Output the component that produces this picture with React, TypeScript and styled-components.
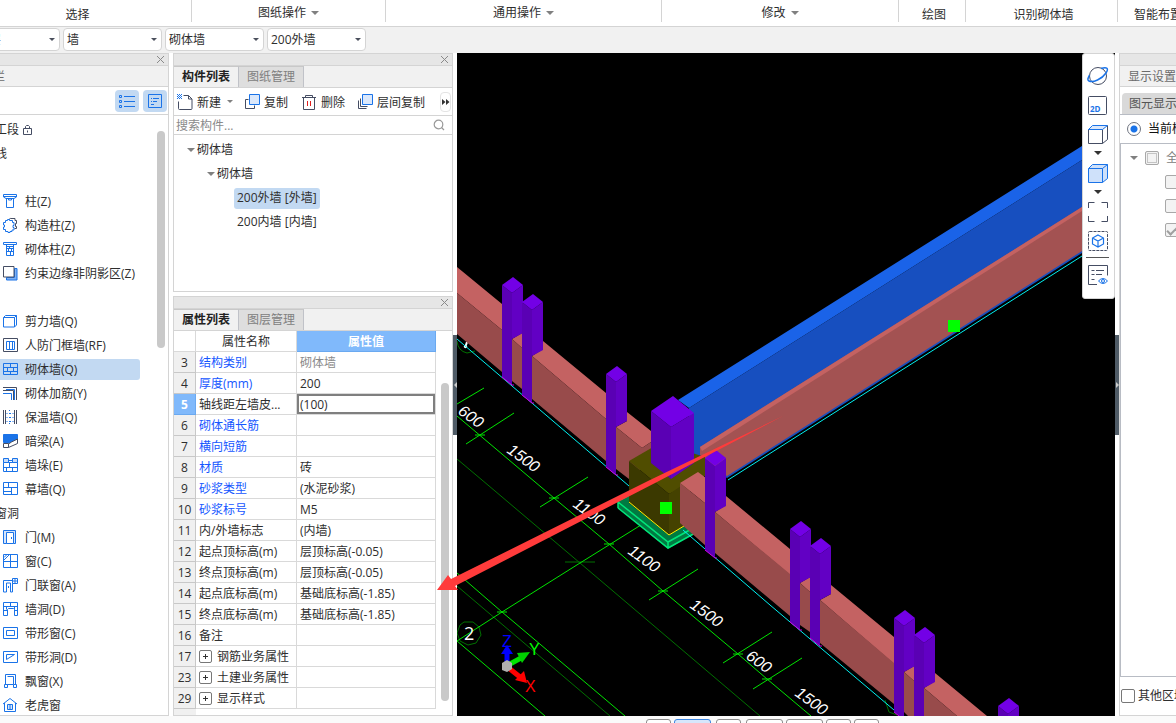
import React from 'react';
import styled, { createGlobalStyle, css } from 'styled-components';

const ink = '#2e2e2e';
const blue = '#1a73e8';
const dark = '#454d63';
const line = '#d4d4d4';
const pick = '#c2d9f2';

const GlobalStyle = createGlobalStyle`
  * { box-sizing: border-box; }
  body { margin: 0; overflow: hidden; background: #fff; }
  body, button, input, select, table {
    font-family: "Open Sans", "Noto Sans CJK SC", sans-serif;
    font-size: 12px;
    line-height: 16px;
    color: ${ink};
  }
  button { padding: 0; border: 0; background: none; white-space: nowrap; }
  svg { display: block; flex: none; }
`;

/* The window is wider than the visible part: its left 40px lie off screen. */
const Shell = styled.div`
  display: flex;
  flex-direction: column;
  height: 100vh;
  margin-left: -40px;
  overflow: hidden;
  background: #fff;
`;

/* ---------- ribbon ---------- */
const Ribbon = styled.header`
  display: flex;
  flex: none;
  height: 27px;
  padding-bottom: 4px;
  border-bottom: 1px solid ${line};
  overflow: hidden;
`;
const RibbonGroup = styled.div<{ $w?: number; $low?: boolean; $start?: boolean }>`
  display: flex;
  flex: ${(p) => (p.$w ? `0 0 ${p.$w}px` : '1 0 0')};
  align-items: flex-start;
  justify-content: ${(p) => (p.$start ? 'flex-start' : 'center')};
  padding: ${(p) => (p.$low ? '7px' : '5px')} 0 0 ${(p) => (p.$start ? '16px' : p.$low ? '4px' : '0')};
  border-right: 1px solid ${line};
  white-space: nowrap;
`;
const RibbonButton = styled.button`
  display: flex;
  align-items: center;
  gap: 5px;
`;
const Caret = styled.span<{ $size?: number; $color?: string }>`
  flex: none;
  border: ${(p) => p.$size ?? 4}px solid transparent;
  border-top-color: ${(p) => p.$color ?? '#808080'};
  border-bottom: 0;
`;

/* ---------- filter bar ---------- */
const FilterBar = styled.div`
  display: flex;
  flex: none;
  gap: 3px;
  height: 26px;
  padding: 1px 1px;
  background: #f1f1f1;
`;
const Combo = styled.label`
  position: relative;
  width: 99px;
  height: 23px;
  &::after {
    content: '';
    position: absolute;
    right: 5px;
    top: 10px;
    border: 3px solid transparent;
    border-top-color: #4a4f5c;
    border-bottom: 0;
  }
`;
const ComboSelect = styled.select`
  appearance: none;
  width: 100%;
  height: 100%;
  padding: 0 3px;
  border: 1px solid ${line};
  border-radius: 4px;
  background: #fff;
`;

/* ---------- panels ---------- */
const Workspace = styled.main`
  display: flex;
  flex: 1 1 0;
  min-height: 0;
`;
const Panel = styled.section<{ $grow?: boolean; $h?: number }>`
  display: flex;
  flex-direction: column;
  flex: ${(p) => (p.$grow ? '1 1 0' : '0 0 auto')};
  ${(p) => p.$h && css`height: ${p.$h}px;`}
  min-height: 0;
  border: 1px solid ${line};
  background: #fff;
  overflow: hidden;
`;
const NavPanel = styled(Panel)`
  flex: 0 0 209px;
`;
const Column = styled.div`
  display: flex;
  flex-direction: column;
  flex: 0 0 280px;
  gap: 4px;
  margin-left: 4px;
`;
const TitleStrip = styled.div`
  display: flex;
  flex: none;
  align-items: center;
  justify-content: flex-end;
  height: 12px;
  padding-right: 3px;
  border-bottom: 1px solid ${line};
  background: #e6e6e6;
`;
const PanelHeading = styled.h2`
  flex: none;
  height: 21px;
  margin: 0;
  padding: 2px 8px;
  border-bottom: 1px solid ${line};
  background: #f1f1f1;
  color: #6b6b6b;
  font-size: 12px;
  font-weight: 400;
  line-height: 18px;
  white-space: nowrap;
`;
const Tabs = styled.div`
  display: flex;
  flex: none;
  height: 22px;
  border-bottom: 1px solid ${line};
  background: #f1f1f1;
`;
const Tab = styled.button<{ $on?: boolean }>`
  width: 65px;
  border-right: 1px solid #c0c2c8;
  border-top: 1px solid #c8c8c8;
  background: ${(p) => (p.$on ? '#f1f1f1' : '#dedede')};
  color: ${(p) => (p.$on ? '#222' : '#808080')};
  font-weight: ${(p) => (p.$on ? 700 : 400)};
`;

/* ---------- navigation ---------- */
const NavTools = styled.div`
  display: flex;
  flex: none;
  justify-content: flex-end;
  gap: 4px;
  height: 28px;
  padding: 3px 1px;
  border-bottom: 1px solid ${line};
`;
const NavTool = styled.button`
  display: grid;
  place-items: center;
  width: 24px;
  height: 22px;
  border-radius: 4px;
  background: ${pick};
`;
const Scroller = styled.div`
  display: flex;
  flex: 1 1 0;
  min-height: 0;
  overflow: hidden;
`;
const NavList = styled.ul`
  flex: 1;
  margin: 0;
  padding: 2px 0 0;
  list-style: none;
`;
const NavEntry = styled.li`
  display: flex;
  align-items: center;
  height: 24px;
`;
const NavGroup = styled.button`
  display: flex;
  align-items: center;
  gap: 3px;
  padding: 2px 0 0 22px;
`;
const NavItem = styled.button<{ $on?: boolean }>`
  display: flex;
  align-items: center;
  width: 179px;
  height: 21px;
  padding-left: 41px;
  border-radius: 3px;
  background: ${(p) => (p.$on ? pick : 'none')};
`;
const NavText = styled.span`
  padding: 2px 0 0 7px;
`;
const ScrollTrack = styled.div<{ $top: number; $side: number }>`
  flex: none;
  width: 8px;
  margin: ${(p) => p.$top}px ${(p) => p.$side}px 0 5px;
`;
const ScrollThumb = styled.div<{ $h: number }>`
  height: ${(p) => p.$h}px;
  border-radius: 4px;
  background: #c9c9c9;
`;

/* ---------- component list ---------- */
const ToolRow = styled.div`
  display: flex;
  flex: none;
  align-items: center;
  height: 28px;
  padding-left: 3px;
  border-bottom: 1px solid ${line};
`;
const Tool = styled.button<{ $w: number }>`
  display: flex;
  align-items: center;
  flex: 0 0 ${(p) => p.$w}px;
  gap: 4px;
`;
const ToolText = styled.span`
  padding: 2px 2px 0 0;
`;
const More = styled.button`
  display: grid;
  place-items: center;
  width: 11px;
  height: 20px;
  margin-left: auto;
  margin-right: 1px;
  border: 1px solid #e4e4e4;
  border-radius: 4px;
`;
const SearchRow = styled.label`
  display: flex;
  flex: none;
  align-items: center;
  height: 19px;
  padding-right: 7px;
  border-bottom: 1px solid ${line};
`;
const SearchInput = styled.input`
  flex: 1;
  min-width: 0;
  padding: 2px 2px 0;
  border: 0;
  outline: 0;
  background: none;
  &::placeholder { color: #8a8a8a; opacity: 1; }
`;
const TreeList = styled.ul`
  margin: 0;
  padding: 3px 0 0;
  list-style: none;
`;
const TreeRow = styled.li<{ $depth: number }>`
  display: flex;
  align-items: center;
  height: 24px;
  padding-left: ${(p) => p.$depth * 20 - 7}px;
`;
const TreeButton = styled.button<{ $on?: boolean }>`
  display: flex;
  align-items: center;
  gap: 2px;
  height: 21px;
  padding: 0 3px 0 0;
  border-radius: 3px;
`;
const TreeLeaf = styled(TreeButton)`
  padding: 0 3px;
  background: ${(p) => (p.$on ? pick : 'none')};
`;
const Indent = styled.span`
  flex: 0 0 7px;
`;

/* ---------- property grid ---------- */
const GridWrap = styled.div`
  display: flex;
  flex: 1;
  flex-direction: column;
`;
const Grid = styled.table`
  width: 262px;
  table-layout: fixed;
  border-collapse: separate;
  border-spacing: 0;
`;
const GridRow = styled.tr`
  height: 21px;
`;
const cell = css`
  height: 21px;
  padding: 2px 3px 0;
  border-right: 1px solid #d9d9d9;
  border-bottom: 1px solid #d9d9d9;
  font-weight: 400;
  text-align: left;
  white-space: nowrap;
  overflow: hidden;
`;
const HeadCell = styled.th<{ $on?: boolean }>`
  ${cell}
  text-align: center;
  ${(p) => p.$on && css`
    background: #80b9fb;
    border-color: #6aa9f0;
    color: #fff;
    font-weight: 700;
  `}
`;
const NumCell = styled.th<{ $on?: boolean }>`
  ${cell}
  padding: 2px 0 0;
  text-align: center;
  background: ${(p) => (p.$on ? '#80b9fb' : '#f0f0f0')};
  border-color: ${(p) => (p.$on ? '#6aa9f0' : '#c8c8c8')};
  color: ${(p) => (p.$on ? '#fff' : ink)};
  font-weight: ${(p) => (p.$on ? 700 : 400)};
`;
const NameCell = styled.td<{ $link?: boolean }>`
  ${cell}
  color: ${(p) => (p.$link ? '#1456ff' : ink)};
`;
const ValueCell = styled.td<{ $on?: boolean; $dim?: boolean }>`
  ${cell}
  color: ${(p) => (p.$dim ? '#8a8a8a' : ink)};
  ${(p) => p.$on && css`box-shadow: inset 0 0 0 2px #7f7f7f;`}
`;
const Expander = styled.button`
  display: inline-grid;
  place-items: center;
  width: 13px;
  height: 13px;
  margin: 0 5px 2px 0;
  border: 1px solid #777;
  border-radius: 2px;
  vertical-align: middle;
`;
const Gutter = styled.div`
  flex: 1;
  width: 22px;
  background: #f0f0f0;
`;

/* ---------- viewport ---------- */
const Splitter = styled.div`
  display: flex;
  flex: 0 0 4px;
  align-items: center;
`;
const Handle = styled.button`
  width: 4px;
  height: 100px;
  background: #4f5b66;
`;
const HandleMark = styled.span<{ $right?: boolean }>`
  display: block;
  width: 0;
  margin: 0 auto;
  border: 3px solid transparent;
  border-left-width: ${(p) => (p.$right ? 3 : 0)}px;
  border-right-width: ${(p) => (p.$right ? 0 : 3)}px;
  border-left-color: #ccc;
  border-right-color: #ccc;
`;
const Viewport = styled.div`
  position: relative;
  flex: 1 1 0;
  min-width: 0;
  background: #000;
`;
const Scene = styled.svg`
  position: absolute;
  inset: 0;
  width: 100%;
  height: 100%;
`;
const Annotation = styled(Scene)`
  overflow: visible;
  pointer-events: none;
  z-index: 2;
`;
const ViewTools = styled.div`
  position: absolute;
  top: 0;
  right: 0;
  z-index: 3;
  display: flex;
  flex-direction: column;
  align-items: center;
  width: 33px;
  height: 246px;
  padding: 11px 2px 0 0;
  border: 1px solid ${line};
  border-radius: 3px;
  background: #fff;
`;
const ViewTool = styled.button<{ $h: number }>`
  display: grid;
  place-items: center;
  width: 24px;
  height: ${(p) => p.$h}px;
`;
const Rule = styled.div`
  width: 23px;
  height: 1px;
  background: #555;
`;

/* ---------- display settings ---------- */
const SidePanel = styled(Panel)`
  flex: 0 0 57px;
  border-right: 0;
  white-space: nowrap;
`;
const SideTabs = styled.div`
  flex: none;
  height: 28px;
  padding: 6px 0 0 2px;
  border-bottom: 1px solid #b8bcc4;
`;
const SideTab = styled.button`
  height: 21px;
  padding: 0 7px;
  border-radius: 4px 4px 0 0;
  background: #d9d9d9;
  color: #555;
`;
const Choice = styled.label<{ $h: number; $pad: number; $dim?: boolean }>`
  display: flex;
  flex: none;
  align-items: center;
  gap: 7px;
  height: ${(p) => p.$h}px;
  padding-left: ${(p) => p.$pad}px;
  color: ${(p) => (p.$dim ? '#808080' : '#111')};
`;
const Radio = styled.input`
  appearance: none;
  flex: none;
  width: 14px;
  height: 14px;
  margin: 0;
  border: 1px solid #6f7480;
  border-radius: 50%;
  background: radial-gradient(circle, ${blue} 3px, #fff 4px);
`;
const Tick = styled.input<{ $dim?: boolean; $all?: boolean }>`
  appearance: none;
  display: grid;
  place-items: center;
  flex: none;
  width: 14px;
  height: 14px;
  margin: 0;
  border: 1px solid ${(p) => (p.$dim ? '#a8a8a8' : '#777')};
  border-radius: 2px;
  background: ${(p) => (p.$dim ? '#f3f3f3' : '#fff')};
  ${(p) => p.$all && css`box-shadow: inset 0 0 0 1px #f3f3f3, inset 0 0 0 2px #c4c4c4;`}
  &:checked::after {
    content: '';
    width: 8px;
    height: 4px;
    border-left: 2px solid #a0a0a0;
    border-bottom: 2px solid #a0a0a0;
    transform: rotate(-45deg);
  }
`;
const SideTree = styled.div`
  display: flex;
  flex: 1 1 0;
  flex-direction: column;
  min-height: 0;
  padding-top: 2px;
  border-top: 1px solid #b8bcc4;
  border-left: 1px solid #b8bcc4;
  border-bottom: 1px solid #b8bcc4;
`;
const SideFoot = styled.label`
  display: flex;
  flex: none;
  align-items: center;
  gap: 3px;
  height: 38px;
  padding-left: 1px;
`;

/* ---------- status bar ---------- */
const StatusBar = styled.footer`
  display: flex;
  flex: none;
  gap: 5px;
  height: 7px;
  padding: 3px 0 0 686px;
  background: #fafafa;
  overflow: hidden;
`;
const StatusGroup = styled.div`
  display: flex;
  gap: 3px;
`;
const StatusButton = styled.button<{ $w: number; $on?: boolean }>`
  flex: 0 0 ${(p) => p.$w}px;
  height: 20px;
  border: 1px solid ${(p) => (p.$on ? '#3a84e0' : '#8c8c8c')};
  border-radius: 3px;
  background: ${(p) => (p.$on ? '#d6e6fb' : '#fff')};
`;

/* ---------- icons ---------- */
type Stroke = [string, string?, string?];
const Glyph = ({ parts, size = 16 }: { parts: Stroke[]; size?: number }) => (
  <svg width={size} height={size} viewBox={`0 0 ${size} ${size}`} fill="none" aria-hidden="true">
    {parts.map(([d, s, f], i) => (
      <path key={i} d={d} stroke={s ?? blue} fill={f ?? 'none'} />
    ))}
  </svg>
);

const navIcons: Record<string, Stroke[]> = {
  column: [['M1.500 1.500h13v2.500l-2.500 1.500h-8l-2.500 -1.500zM2 3.500h12'], ['M4.500 5.500v9h7v-9M6.500 5.500v1.500h3v-1.500']],
  structural: [['M7 2.500q1 -1.500 3 -1h3v2h1.500v3h-1v3h1v2h-2', dark], ['M3.500 5.500v-2h2v-1h2v1h3v2h1.500v3h-1v2h1v2.500h-2v1.500h-2v1h-2v-1h-2.500v-2h-2v-2.500h1v-2h-1v-2.500z']],
  brickColumn: [['M1.500 1.500h13v2h-13z'], ['M4.500 3.500v11h7v-11M4.500 7.500h7M4.500 10.500h7M4.500 5.500h7M7.500 5.500v2M9.500 7.500v3M6.500 7.500v3M8.500 10.500v4']],
  shadow: [['M4.500 12.500h8v-9h2.500v11.500h-10.500z', blue, '#7fb0f2'], ['M1.500 1.500h10.500v10.500h-10.500z', dark, '#fff']],
  shear: [['M1.500 4.500h11v9.500h-11zM1.500 4.500l2 -2h11v9.500l-2 2M12.500 4.500l2 -2']],
  frame: [['M1.500 1.500h14v13h-14z', dark], ['M4.500 4.500v8h8v-8zM7.500 4.500v8M10.500 4.500v8']],
  brick: [['M1.500 2.500h14v11h-14zM1.500 6.500h14M1.500 10.500h14M8.500 2.500v4M5.500 6.500v4M11.500 6.500v4M8.500 10.500v3']],
  rebar: [['M1 2.500h13.500v12.500M1 5.500h10.500v9.500', dark], ['M4 4.500h8.500v10.500M1 8.500h8.500v6.500']],
  insulate: [['M3.500 1v14M12.500 1v14M1.500 1v14M14.500 1v14', dark], ['M4.500 4.500h1M7 4.500h2M10.500 4.500h1M4.500 8.500h1M7 8.500h2M10.500 8.500h1M4.500 12.500h1M7 12.500h2M10.500 12.500h1M7.500 1v1M7.500 14v1']],
  hidden: [['M1.500 1.500h14v5l-7 3h-7z', blue, blue], ['M1.500 10.500h5v4h-5zM6.500 14.500l9 -4v-4.500l-6 3l-3 2', dark, '#fff']],
  pier: [['M1.500 5.500h14v9h-14zM1.500 10.500h14M7.500 5.500v5M4.500 10.500v4M10.500 10.500v4'], ['M1.500 1.500h5v4h-5zM10.500 1.500h5v4h-5zM6.500 3.500h4', blue, '#c9ddf8']],
  curtain: [['M1.500 1.500h14v12h-14zM1.500 6.500h14M1.500 10.500h8M6.500 1.500v5M9.500 6.500v7']],
  door: [['M1.500 1.500h12v13h-2v-11h-7v11h-3z', blue, '#d5e5fb'], ['M4.500 14.500h7M9.500 8v2']],
  window: [['M1.500 1.500h14v13h-14zM8.500 1.500v13M1.500 8.500h14'], ['M2 7l5 -5M2 4.500l3 -3']],
  doorWindow: [['M1.500 3.500h9v11.500h-2v-9h-4v9h-3zM6.500 9v2'], ['M10.500 1.500h5v5h-5zM13 1.500v5M10.500 4h5', blue, '#fff']],
  hole: [['M1.500 1.500h14v13h-3v-6l-1 -1h-5l-1 1v6h-4zM1.500 5.500h14M8.500 1.500v4M4.500 5.500v3M12.500 5.500v3M1.500 9.500h4M12.500 9.500h3']],
  ribbonWindow: [['M1.500 2.500h14v11h-14z'], ['M4.500 5.500h8v5h-8z']],
  ribbonHole: [['M1.500 2.500h14v11h-14zM4.500 5.500h8l-8 5z']],
  bay: [['M3.500 1.500h10v10h-10zM5.500 3.500h6v8'], ['M2.500 11.500h3v3h-3zM11.500 11.500h3v3h-3z', blue, '#fff']],
  dormer: [['M1 7l7 -5.500l7 5.500M2.500 6v8.500h11v-8.500'], ['M5.500 7.500h5v5h-5zM8 7.500v5', blue, '#d5e5fb']],
};

type NavRow = { text?: string; icon?: string; lock?: boolean; on?: boolean };
const navRows: NavRow[] = [
  { text: '施工段', lock: true },
  { text: '轴线' },
  {},
  { text: '柱(Z)', icon: 'column' },
  { text: '构造柱(Z)', icon: 'structural' },
  { text: '砌体柱(Z)', icon: 'brickColumn' },
  { text: '约束边缘非阴影区(Z)', icon: 'shadow' },
  {},
  { text: '剪力墙(Q)', icon: 'shear' },
  { text: '人防门框墙(RF)', icon: 'frame' },
  { text: '砌体墙(Q)', icon: 'brick', on: true },
  { text: '砌体加筋(Y)', icon: 'rebar' },
  { text: '保温墙(Q)', icon: 'insulate' },
  { text: '暗梁(A)', icon: 'hidden' },
  { text: '墙垛(E)', icon: 'pier' },
  { text: '幕墙(Q)', icon: 'curtain' },
  { text: '门窗洞' },
  { text: '门(M)', icon: 'door' },
  { text: '窗(C)', icon: 'window' },
  { text: '门联窗(A)', icon: 'doorWindow' },
  { text: '墙洞(D)', icon: 'hole' },
  { text: '带形窗(C)', icon: 'ribbonWindow' },
  { text: '带形洞(D)', icon: 'ribbonHole' },
  { text: '飘窗(X)', icon: 'bay' },
  { text: '老虎窗', icon: 'dormer' },
];

type Prop = { n: number; name: string; value?: string; link?: boolean; on?: boolean; dim?: boolean; group?: boolean };
const props: Prop[] = [
  { n: 3, name: '结构类别', value: '砌体墙', link: true, dim: true },
  { n: 4, name: '厚度(mm)', value: '200', link: true },
  { n: 5, name: '轴线距左墙皮...', value: '(100)', on: true },
  { n: 6, name: '砌体通长筋', link: true },
  { n: 7, name: '横向短筋', link: true },
  { n: 8, name: '材质', value: '砖', link: true },
  { n: 9, name: '砂浆类型', value: '(水泥砂浆)', link: true },
  { n: 10, name: '砂浆标号', value: 'M5', link: true },
  { n: 11, name: '内/外墙标志', value: '(内墙)' },
  { n: 12, name: '起点顶标高(m)', value: '层顶标高(-0.05)' },
  { n: 13, name: '终点顶标高(m)', value: '层顶标高(-0.05)' },
  { n: 14, name: '起点底标高(m)', value: '基础底标高(-1.85)' },
  { n: 15, name: '终点底标高(m)', value: '基础底标高(-1.85)' },
  { n: 16, name: '备注' },
  { n: 17, name: '钢筋业务属性', group: true },
  { n: 23, name: '土建业务属性', group: true },
  { n: 29, name: '显示样式', group: true },
];

const CloseMark = () => (
  <svg width="9" height="9" viewBox="0 0 9 9" stroke="#8a8a8a" aria-hidden="true">
    <path d="M1 1l7 7M8 1l-7 7" />
  </svg>
);

/* Small post: top diamond, left face to the ground, right face cut off by the wall in front. */
const Post = ({ x, y, left, right }: { x: number; y: number; left: number; right: number }) => (
  <g>
    <path d={`M${x} ${y + 8}l10 8V${left}l-10 -8z`} fill="#5a00b4" />
    <path d={`M${x + 10} ${y + 16}l11 -8V${right - 6}l-11 6z`} fill="#6200c4" />
    <path d={`M${x + 11} ${y}l10 8l-11 8l-10 -8z`} fill="#7300e6" />
    <path d={`M${x} ${left - 8}l10 8h2`} stroke="#d000e0" fill="none" />
  </g>
);

const top = '#c46262';
const front = '#984b4b';
const dims: [number, number, string][] = [
  [457, 413, '600'], [506, 452, '1500'], [572, 506, '1100'], [627, 553, '1100'],
  [689, 607, '1500'], [745, 658, '600'], [794, 695, '1500'],
];

const Model = () => (
  <Scene viewBox="457 53 658 663" preserveAspectRatio="xMidYMid slice" role="img" aria-label="三维视图">
    <g fill="none" stroke="#007000">
      <path d="M457 459L482 480L580 563L760 716M457 586L610 716M565 562h30" />
      <path d="M464 622h9l6 5l2 8l-5 8l-8 2l-8 -4l-3 -8l3 -8z" />
      <path d="M457 341q1 10 10 12l8 -2M885 700l4 12l8 3" />
    </g>
    <g fill="none" stroke="#00e400">
      <path d="M457 416L554 498L609 544L663 591L738 654L767 679L811 716" />
      <path d="M457 404L484 388M466 444L514 413M540 507L588 477M457 641L502 612L580 563L649 520" />
      <path d="M649 600L698 569M723 663L772 632M753 689L802 658" />
      <path d="M457 573L502 612L625 716M457 641L545 716" />
      <path d="M475 435h10M549 498h10M604 544h10M658 591h10M733 654h10M762 679h10M497 612h10" />
    </g>
    <g fill="#fff" fontFamily='"Liberation Sans", sans-serif' fontStyle="italic" fontSize="16">
      {dims.map(([x, y, t]) => (
        <text key={`${x}`} transform={`translate(${x} ${y}) rotate(36)`}>{t}</text>
      ))}
    </g>
    <path d="M467 342l-2 6M464 346l3 1" stroke="#fff" strokeWidth="2" />
    <text x="464" y="640" fontSize="18" fill="#fff" fontFamily='"Open Sans", sans-serif'>2</text>

    {/* long inclined walls */}
    <path d="M678 400L1082 146L1115 125V139L1082 160L689 408z" fill="#1a63e8" />
    <path d="M689 408L1082 160L1115 139V232L1082 253L727 478L690 455z" fill="#174fbf" />
    <path d="M700 447L1082 207L1115 186V230L1082 251L727 476L700 455z" fill="#a35252" />
    <path d="M700 447L1082 207V211L702 451z" fill={top} />
    <path d="M728 480L1082 256" stroke="#00f0f0" fill="none" />

    {/* left wall */}
    <path d="M457 267L502 304V330L457 293zM543 341L606 393V419L532 356L543 349zM627 412L651 431V442L642 448L616 427L627 421zM512 339L522 333V348z" fill={top} />
    <path d="M457 293L502 330V372L457 334zM512 339L522 348V389L512 381zM532 356L606 419V461L532 399zM616 427L642 448L651 442V460L629 479L616 469z" fill={front} />
    <path d="M457 339L629 486" stroke="#00f0f0" fill="none" />
    <Post x={502} y={277} left={385} right={339} />
    <Post x={522} y={294} left={403} right={356} />
    <Post x={606} y={366} left={475} right={427} />

    {/* footing and stub column */}
    <path d="M618 501L629 495L669 530L705 520L700 530L668 549L618 508z" fill="#007a42" />
    <path d="M618 502L668 542L697 526M618 508L668 548L697 532M618 501L629 495M618 502v6M668 542v6" stroke="#00e67a" strokeWidth="1.500" fill="none" />
    <path d="M629 461L660 443L705 457V476L669 494z" fill="#504d00" />
    <path d="M629 461L669 494V535L629 503z" fill="#3b3900" />
    <path d="M669 494L690 480V523L669 535z" fill="#454200" />
    <path d="M629 502L669 535L684 526" stroke="#ffee00" fill="none" />
    <path d="M651 411L671 427V479L651 463z" fill="#5a00b4" />
    <path d="M671 427L694 413V463L671 479z" fill="#6200c4" />
    <path d="M673 396L694 413L671 427L651 411z" fill="#7300e6" />

    {/* right wall */}
    <path d="M680 483L698 472L706 478V504zM726 496L790 549V575L715 512L726 505zM800 583L810 577V592zM831 585L894 637V664L820 600L831 594zM904 672L914 666V681zM935 673L987 716H957L924 688L935 681z" fill={top} />
    <path d="M680 483L706 504V546L680 523zM715 512L790 574V616L715 553zM800 583L810 592V632L800 625zM820 600L894 663V704L820 643zM904 672L914 681V716H908L904 712zM924 688L957 716H924z" fill={front} />
    <path d="M683 530L770 605L894 710" stroke="#00f0f0" fill="none" />
    <Post x={705} y={450} left={558} right={512} />
    <Post x={790} y={521} left={630} right={583} />
    <Post x={810} y={538} left={646} right={600} />
    <Post x={894} y={610} left={720} right={672} />
    <Post x={914} y={627} left={740} right={688} />
    <Post x={998} y={698} left={810} right={760} />
    <path d="M660 502h12v12h-12zM948 320h12v12h-12z" fill="#00ff00" />

    {/* axis tripod */}
    <path d="M507 664V652" stroke="#0000ff" strokeWidth="5" />
    <path d="M501 654l6 -9l6 9z" fill="#0000ff" />
    <path d="M510 664L521 658" stroke="#00e400" strokeWidth="5" />
    <path d="M517 653l13 -1l-8 11z" fill="#00d000" />
    <path d="M510 669L520 677" stroke="#ff0000" strokeWidth="5" />
    <path d="M524 671l3 12l-12 -3z" fill="#ff0000" />
    <path d="M502 663l5 -3l5 3v6l-5 3l-5 -2z" fill="#b0b0b0" />
    <g fontFamily='"Liberation Sans", sans-serif' fontSize="16">
      <text x="502" y="647" fill="#0000ff">Z</text>
      <text x="529" y="655" fill="#00ff00">Y</text>
      <text x="525" y="692" fill="#ff0000">X</text>
    </g>
  </Scene>
);

export default function App() {
  return (
    <>
      <GlobalStyle />
      <Shell>
        <Ribbon>
          <RibbonGroup $w={232} $low>选择</RibbonGroup>
          <RibbonGroup $w={194}><RibbonButton>图纸操作<Caret /></RibbonButton></RibbonGroup>
          <RibbonGroup $w={276}><RibbonButton>通用操作<Caret /></RibbonButton></RibbonGroup>
          <RibbonGroup $w={237}><RibbonButton>修改<Caret /></RibbonButton></RibbonGroup>
          <RibbonGroup $w={67} $low>绘图</RibbonGroup>
          <RibbonGroup $w={152} $low>识别砌体墙</RibbonGroup>
          <RibbonGroup $low $start>智能布置</RibbonGroup>
        </Ribbon>

        <FilterBar>
          {['基础层', '墙', '砌体墙', '200外墙'].map((v) => (
            <Combo key={v}>
              <ComboSelect aria-label={v} defaultValue={v}><option>{v}</option></ComboSelect>
            </Combo>
          ))}
        </FilterBar>

        <Workspace>
          <NavPanel as="nav">
            <TitleStrip><button aria-label="关闭"><CloseMark /></button></TitleStrip>
            <PanelHeading>导航栏</PanelHeading>
            <NavTools>
              <NavTool aria-label="列表">
                <Glyph parts={[['M5 3.500h11M5 8.500h11M5 13.500h11'], ['M0.500 2.500h2v2h-2zM0.500 7.500h2v2h-2zM0.500 12.500h2v2h-2z']]} />
              </NavTool>
              <NavTool aria-label="详情">
                <Glyph parts={[['M1.500 1.500h13v13h-13z'], ['M4 5.500h1M6 5.500h6M4 8.500h1M6 8.500h4M4 11.500h3']]} />
              </NavTool>
            </NavTools>
            <Scroller>
              <NavList>
                {navRows.map((r, i) => (
                  <NavEntry key={i}>
                    {r.icon && <NavItem $on={r.on}><Glyph parts={navIcons[r.icon]} /><NavText>{r.text}</NavText></NavItem>}
                    {r.text && !r.icon && (
                      <NavGroup>
                        {r.text}
                        {r.lock && (
                          <svg width="11" height="12" viewBox="0 0 11 12" fill="none" stroke={dark} aria-hidden="true">
                            <path d="M1.500 4.500h8v6h-8zM3.500 4.500v-2l1 -1h2l1 1v2M5.500 6.500v2" />
                          </svg>
                        )}
                      </NavGroup>
                    )}
                  </NavEntry>
                ))}
              </NavList>
              <ScrollTrack $top={16} $side={3}><ScrollThumb $h={217} /></ScrollTrack>
            </Scroller>
          </NavPanel>

          <Column>
            <Panel $h={239}>
              <TitleStrip><button aria-label="关闭"><CloseMark /></button></TitleStrip>
              <Tabs><Tab $on>构件列表</Tab><Tab>图纸管理</Tab></Tabs>
              <ToolRow>
                <Tool $w={67}>
                  <Glyph parts={[['M6.500 1.500h5l3.500 3.500v9.500q0 1 -1 1h-11.500q-1 0 -1 -1v-7M11.500 1.500v3.500h3.500', dark], ['M0 0.500h1M2 0.500h1M4 0.500h1M1 1.500h1M3 1.500h1M0 2.500h1M2 2.500h1M4 2.500h1M1 3.500h1M3 3.500h1M0 4.500h1M2 4.500h1M4 4.500h1']]} />
                  <ToolText>新建</ToolText><Caret $size={3} />
                </Tool>
                <Tool $w={57}>
                  <Glyph parts={[['M4.500 5.500h-3v9h9v-3', dark], ['M5.500 0.500h10v10h-10z', blue, '#dbe8fb']]} />
                  <ToolText>复制</ToolText>
                </Tool>
                <Tool $w={56}>
                  <Glyph parts={[['M1 3.500h14M4.500 3.500v-2h7v2M2.500 4v11.500h11v-11.500', dark], ['M6.500 7v5M9.500 7v5', '#e02020']]} />
                  <ToolText>删除</ToolText>
                </Tool>
                <Tool $w={70}>
                  <Glyph parts={[['M3.500 4.500v8h7M1.500 6.500v8h8', dark], ['M5.500 0.500h10v10h-10z', blue, '#dbe8fb']]} />
                  <ToolText>层间复制</ToolText>
                </Tool>
                <More aria-label="更多">
                  <svg width="8" height="6" viewBox="0 0 8 6" fill="#333"><path d="M0 0l3.500 3l-3.500 3zM4 0l3.500 3l-3.500 3z" /></svg>
                </More>
              </ToolRow>
              <SearchRow>
                <SearchInput placeholder="搜索构件..." aria-label="搜索构件" />
                <svg width="12" height="12" viewBox="0 0 12 12" fill="none" stroke="#999" strokeWidth="1.200"><circle cx="5.500" cy="5.500" r="4.300" /><path d="M8.500 8.500l2.500 2.500" /></svg>
              </SearchRow>
              <TreeList>
                <TreeRow $depth={1}><TreeButton><Caret />砌体墙</TreeButton></TreeRow>
                <TreeRow $depth={2}><TreeButton><Caret />砌体墙</TreeButton></TreeRow>
                <TreeRow $depth={3}><Indent /><TreeLeaf $on>200外墙 [外墙]</TreeLeaf></TreeRow>
                <TreeRow $depth={3}><Indent /><TreeLeaf>200内墙 [内墙]</TreeLeaf></TreeRow>
              </TreeList>
            </Panel>

            <Panel $grow>
              <TitleStrip><button aria-label="关闭"><CloseMark /></button></TitleStrip>
              <Tabs><Tab $on>属性列表</Tab><Tab>图层管理</Tab></Tabs>
              <Scroller>
                <GridWrap>
                  <Grid>
                    <colgroup><col width="22" /><col width="101" /><col width="139" /></colgroup>
                    <thead>
                      <GridRow><HeadCell /><HeadCell>属性名称</HeadCell><HeadCell $on>属性值</HeadCell></GridRow>
                    </thead>
                    <tbody>
                      {props.map((p) => (
                        <GridRow key={p.n}>
                          <NumCell scope="row" $on={p.on}>{p.n}</NumCell>
                          <NameCell $link={p.link}>
                            {p.group && (
                              <Expander aria-label={`展开${p.name}`}>
                                <svg width="5" height="5" viewBox="0 0 5 5" stroke="#333"><path d="M0 2.500h5M2.500 0v5" /></svg>
                              </Expander>
                            )}
                            {p.name}
                          </NameCell>
                          <ValueCell $on={p.on} $dim={p.dim}>{p.value}</ValueCell>
                        </GridRow>
                      ))}
                    </tbody>
                  </Grid>
                  <Gutter />
                </GridWrap>
                <ScrollTrack $top={52} $side={3}><ScrollThumb $h={318} /></ScrollTrack>
              </Scroller>
            </Panel>
          </Column>

          <Splitter><Handle aria-label="收起左侧"><HandleMark /></Handle></Splitter>
          <Viewport>
            <Model />
            <Annotation viewBox="457 53 658 663" preserveAspectRatio="xMidYMid slice" aria-hidden="true">
              <path d="M437 590L448 575L451 579L650 480L783 416L657 482L455 586L458 590z" fill="#ff3b3b" />
            </Annotation>
            <ViewTools>
              <ViewTool $h={22} aria-label="动态观察">
                <svg width="22" height="22" viewBox="0 0 22 22" fill="none" stroke={dark}>
                  <circle cx="11" cy="11" r="8.500" />
                  <path d="M14 3.500c6 -2 8 0 5 4.500c-4 6 -13 10 -17 8c-2 -1 -1 -3 0.500 -6" stroke={blue} strokeWidth="1.500" />
                </svg>
              </ViewTool>
              <ViewTool $h={36} aria-label="二维">
                <svg width="22" height="22" viewBox="0 0 22 22" fill="none" stroke={dark}>
                  <rect x="1.500" y="2.500" width="18" height="18" rx="1" />
                  <text x="3" y="18" fontSize="8" fontWeight="700" fill={blue} stroke="none">2D</text>
                </svg>
              </ViewTool>
              <ViewTool $h={22} aria-label="线框">
                <svg width="22" height="22" viewBox="0 0 22 22" fill="none" stroke={dark}>
                  <path d="M1.500 6.500h14v14h-14zM15.500 20.500l5 -4v-14" />
                  <path d="M1.500 6.500l4 -4h15l-5 4z" stroke={blue} fill="#dbe8fb" />
                </svg>
              </ViewTool>
              <ViewTool $h={16} aria-label="线框选项"><Caret $color="#333" /></ViewTool>
              <ViewTool $h={24} aria-label="实体">
                <svg width="22" height="22" viewBox="0 0 22 22" fill="#cfe1fa" stroke={blue}>
                  <path d="M1.500 6.500l4 -4h15v14l-5 4h-14zM1.500 6.500h14v14M15.500 6.500l5 -4" />
                </svg>
              </ViewTool>
              <ViewTool $h={14} aria-label="实体选项"><Caret $color="#333" /></ViewTool>
              <ViewTool $h={26} aria-label="全屏">
                <svg width="22" height="22" viewBox="0 0 22 22" fill="none" stroke={dark}>
                  <path d="M1.500 7v-5.500h6M14.500 1.500h6v5.500M20.500 15v5.500h-6M7.500 20.500h-6v-5.500" />
                </svg>
              </ViewTool>
              <ViewTool $h={32} aria-label="局部三维">
                <svg width="22" height="22" viewBox="0 0 22 22" fill="none" stroke={dark}>
                  <rect x="1.500" y="1.500" width="19" height="19" rx="1" strokeDasharray="3 1" />
                  <path d="M11 5l5.500 3v6l-5.500 3l-5.500 -3v-6zM5.500 8l5.500 3l5.500 -3M11 11v6" stroke={blue} strokeWidth="1.200" />
                </svg>
              </ViewTool>
              <Rule />
              <ViewTool $h={34} aria-label="显示设置">
                <svg width="22" height="22" viewBox="0 0 22 22" fill="none" stroke={dark}>
                  <path d="M10 20.500h-8.500v-19h19v10M4.500 6.500h3M9 6.500h8M4.500 10.500h3M9 10.500h6M4.500 15.500h3" />
                  <path d="M11.500 17q4.500 -5 9 0q-4.500 5 -9 0z" stroke={blue} fill="#fff" />
                  <circle cx="16" cy="17" r="1.500" stroke={blue} />
                </svg>
              </ViewTool>
            </ViewTools>
          </Viewport>
          <Splitter><Handle aria-label="收起右侧"><HandleMark $right /></Handle></Splitter>

          <SidePanel as="aside">
            <TitleStrip />
            <PanelHeading>显示设置</PanelHeading>
            <SideTabs><SideTab>图元显示</SideTab></SideTabs>
            <Choice $h={28} $pad={7}><Radio type="radio" name="scope" defaultChecked />当前楼层</Choice>
            <SideTree>
              <Choice $h={24} $pad={9} $dim><Caret /><Tick type="checkbox" $dim $all />全部</Choice>
              <Choice $h={24} $pad={44} $dim><Tick type="checkbox" $dim aria-label="轴网" /></Choice>
              <Choice $h={24} $pad={44} $dim><Tick type="checkbox" $dim aria-label="辅助轴线" /></Choice>
              <Choice $h={24} $pad={44} $dim><Tick type="checkbox" $dim defaultChecked aria-label="柱" /></Choice>
            </SideTree>
            <SideFoot><Tick type="checkbox" />其他区域</SideFoot>
          </SidePanel>
        </Workspace>

        <StatusBar>
          <StatusGroup>
            <StatusButton $w={25} aria-label="捕捉" />
            <StatusButton $w={37} $on aria-label="正交" />
          </StatusGroup>
          <StatusGroup>
            <StatusButton $w={25} aria-label="交点" />
          </StatusGroup>
          <StatusGroup>
            <StatusButton $w={37} aria-label="垂点" />
            <StatusButton $w={37} aria-label="中点" />
            <StatusButton $w={25} aria-label="顶点" />
            <StatusButton $w={25} aria-label="坐标" />
          </StatusGroup>
        </StatusBar>
      </Shell>
    </>
  );
}
